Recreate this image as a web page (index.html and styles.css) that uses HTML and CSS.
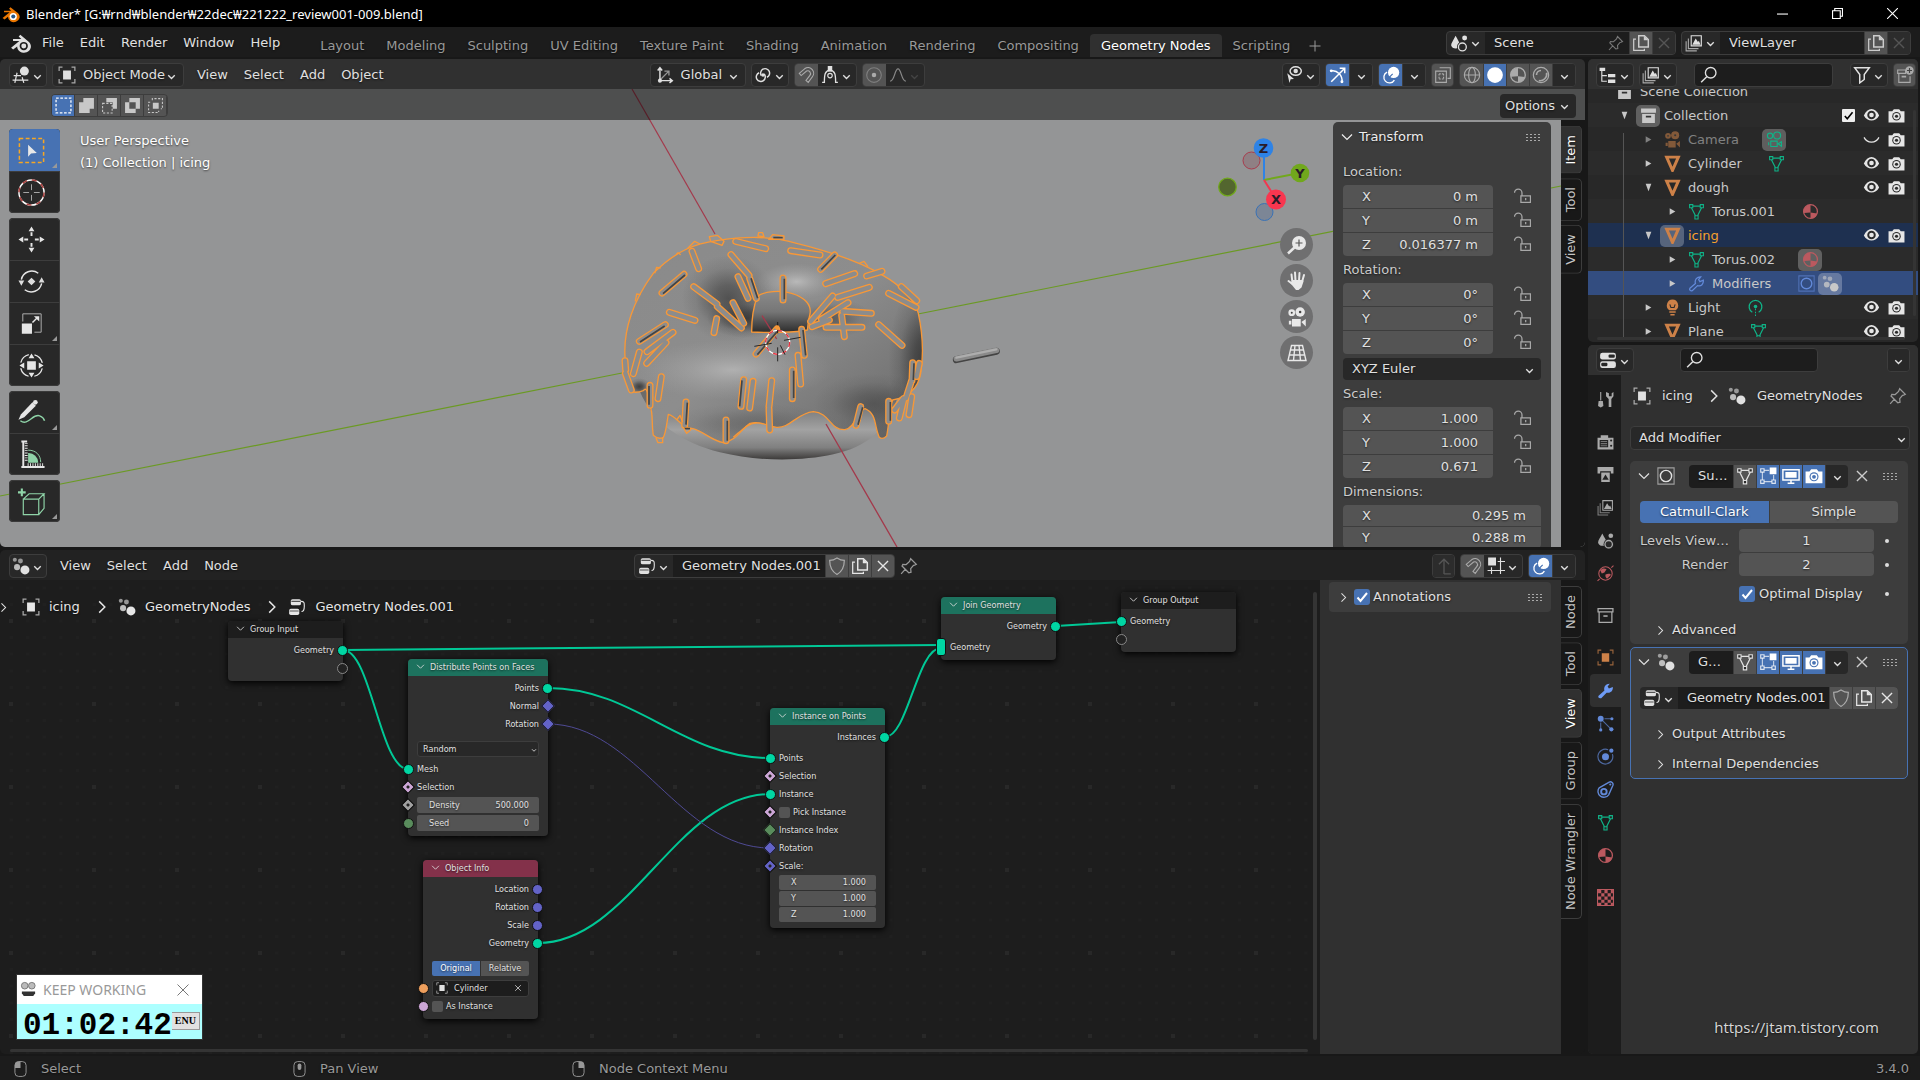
FILE: index.html
```html
<!DOCTYPE html>
<html lang="en">
<head>
    <meta charset="UTF-8">
    <meta name="viewport" content="width=device-width, initial-scale=1.0">
    <title>Blender* [G:₩rnd₩blender₩22dec₩221222_review001-009.blend]</title>
    <link rel="stylesheet" href="styles.css">
</head>
<body>

<!-- Icon sprite -->
<svg class="sprite" aria-hidden="true">
    <symbol id="chev" viewBox="0 0 16 16"><path d="M4 6.5l4 4 4-4" fill="none" stroke="currentColor" stroke-width="1.7"/></symbol>
    <symbol id="chev-thin" viewBox="0 0 16 16"><path d="M3 5.500l5 5 5-5" fill="none" stroke="currentColor" stroke-width="1.200"/></symbol>
    <symbol id="right" viewBox="0 0 16 16"><path d="M5.500 3l5 5-5 5" fill="none" stroke="currentColor" stroke-width="1.300"/></symbol>
    <symbol id="tri-down" viewBox="0 0 16 16"><path d="M4.500 3.500h7L8 12.500z" fill="currentColor"/></symbol>
    <symbol id="tri-right" viewBox="0 0 16 16"><path d="M4.500 4v8l7-4z" fill="currentColor"/></symbol>
    <symbol id="close" viewBox="0 0 16 16"><path d="M3.500 3.500l9 9m0-9l-9 9" fill="none" stroke="currentColor" stroke-width="1.200"/></symbol>
    <symbol id="plus" viewBox="0 0 16 16"><path d="M8 2.500v11M2.500 8h11" fill="none" stroke="currentColor"/></symbol>
    <symbol id="blender" viewBox="0 0 16 16"><path d="M.8 11.500L6.800 6.500H2.200V5h6L6.300 3.300 7.500 2l6.300 5.300a5 4.600 0 1 1-8.600 3.200l-2.900 2.300z" fill="currentColor"/><circle cx="10" cy="10.200" r="3" fill="#1c1c1c"/><circle cx="10" cy="10.200" r="1.800" fill="currentColor"/></symbol>
    <symbol id="blender-color" viewBox="0 0 16 16"><path d="M.5 11.500L6.800 6.500H1.800V5h6.400L6.300 3.300 7.500 2l6.800 5.300a5.200 4.700 0 1 1-9 3.200l-3 2.300z" fill="#ea7600"/><circle cx="10" cy="10.200" r="3.200" fill="#fff"/><circle cx="10" cy="10.200" r="1.800" fill="#265787"/></symbol>
    <symbol id="editor3d" viewBox="0 0 16 16"><path d="M4.500 6L2.500 15M9 10l1.500 5M1.500 8.500H8M.5 12.500h14" fill="none" stroke="currentColor" stroke-width="1.100"/><circle cx="11" cy="4.500" r="4" fill="currentColor"/></symbol>
    <symbol id="object" viewBox="0 0 16 16"><rect x="4.500" y="4" width="7" height="8" fill="currentColor"/><path d="M1 4.500V1h3M12 1h3v3.500M15 11.500V15h-3M4 15H1v-3.500" fill="none" stroke="currentColor" stroke-opacity=".7" stroke-width="1.100"/></symbol>
    <symbol id="axes" viewBox="0 0 16 16"><path d="M3.500 13V2M1.500 4l2-2.500 2 2.500M3.500 13H14M12 11l2.500 2-2.500 2" fill="none" stroke="currentColor" stroke-width="1.300"/><path d="M4 12l7-7M7.500 4.500H11.500V8.500" fill="none" stroke="currentColor" stroke-opacity=".6" stroke-width="1.200"/><circle cx="3.500" cy="13" r="1.800" fill="currentColor"/></symbol>
    <symbol id="pivot" viewBox="0 0 16 16"><path d="M6.500 8.500a4 4 0 1 1 5 1.500M9 7a4 4 0 1 1-4.500-1" fill="none" stroke="currentColor" stroke-width="1.300"/><circle cx="8" cy="8" r="1.600" fill="currentColor"/></symbol>
    <symbol id="magnet" viewBox="0 0 16 16"><path d="M2 6.500l5-4.200a5 5 0 0 1 6.500 7.500L10 14.500l-2-1.700 3.500-4.500a2.500 2.500 0 0 0-3-3.800L3.700 8.500z" fill="none" stroke="currentColor"/></symbol>
    <symbol id="snapvert" viewBox="0 0 16 16"><path d="M1 14.500h2c0-7 .5-10 5-11 4.500 1 5 4 5 11h2" fill="none" stroke="currentColor" stroke-width="1.200"/><rect x="6" y="0" width="4" height="5" fill="currentColor"/><circle cx="8" cy="8.500" r="2" fill="none" stroke="currentColor"/></symbol>
    <symbol id="prop" viewBox="0 0 16 16"><circle cx="8" cy="8" r="6.500" fill="none" stroke="currentColor" stroke-opacity=".5"/><circle cx="8" cy="8" r="2" fill="currentColor"/></symbol>
    <symbol id="bell" viewBox="0 0 16 16"><path d="M1 13.500C5 13.500 5 2.500 8 2.500s3 11 7 11" fill="none" stroke="currentColor" stroke-width="1.100"/></symbol>
    <symbol id="visible" viewBox="0 0 16 16"><ellipse cx="9.500" cy="4.500" rx="5" ry="3.800" fill="none" stroke="currentColor" stroke-width="1.300"/><circle cx="9.500" cy="4.500" r="2" fill="currentColor"/><path d="M2 6.500l6 5-3 .3-1 3.200z" fill="currentColor"/></symbol>
    <symbol id="gizmo" viewBox="0 0 16 16"><path d="M2 14L14 2M9.500 2H14v4.500M1.500 4.500C7 3 12.500 8.500 11.500 14.500" fill="none" stroke="currentColor" stroke-width="1.300"/><circle cx="2" cy="4.300" r="1.300" fill="currentColor"/><circle cx="11.500" cy="14" r="1.300" fill="currentColor"/></symbol>
    <symbol id="overlay" viewBox="0 0 16 16"><circle cx="10.300" cy="5.700" r="5" fill="currentColor"/><path d="M4.500 5.500a5 5 0 1 0 6.500 7" fill="none" stroke="currentColor" stroke-width="1.200"/><path d="M6.500 10l3-3" stroke="#4772b3"/></symbol>
    <symbol id="xray" viewBox="0 0 16 16"><path d="M5 1.500h9.500V11H12M1.500 4.500h9.500v10H1.500z" fill="none" stroke="currentColor"/><path d="M4.500 7h4M4.500 11.500h4M8.500 7v4.500M4.500 7v4.500" stroke="currentColor" fill="none" stroke-dasharray="1.500 1"/></symbol>
    <symbol id="wire" viewBox="0 0 16 16"><circle cx="8" cy="8" r="6.800" fill="none" stroke="currentColor"/><ellipse cx="8" cy="8" rx="3" ry="6.800" fill="none" stroke="currentColor"/><path d="M1 8h14" stroke="currentColor"/></symbol>
    <symbol id="solid" viewBox="0 0 16 16"><circle cx="8" cy="8" r="7" fill="currentColor"/></symbol>
    <symbol id="material" viewBox="0 0 16 16"><circle cx="8" cy="8" r="6.500" fill="none" stroke="currentColor" stroke-width="1.200"/><path d="M8 1.500a6.500 6.500 0 0 0-6.300 8L8 9zM8 9l6.300.8A6.500 6.500 0 0 1 8 14.500z" fill="currentColor"/></symbol>
    <symbol id="rendered" viewBox="0 0 16 16"><circle cx="8" cy="8" r="6.800" fill="none" stroke="currentColor" stroke-width="1.100"/><path d="M4 8a4 4 0 0 1 4-4M6 13a6 6 0 0 0 7-7" fill="none" stroke="currentColor" stroke-width="1.500"/></symbol>
    <symbol id="outliner" viewBox="0 0 16 16"><path d="M.5 1.500h5v3h-5zM8 7h6.500v3H8zM8 12h6.500v3H8z" fill="currentColor"/><path d="M2.500 4.500v9H7M2.500 8.500H7" fill="none" stroke="currentColor"/></symbol>
    <symbol id="layers" viewBox="0 0 16 16"><path d="M5.500 1.500h9v9h-9z" fill="none" stroke="currentColor"/><path d="M3 4v9h9M1 6.500V15h9.500" fill="none" stroke="currentColor" stroke-opacity=".7"/><path d="M6.500 9.500l3-5.500 2 3 .8-1 1.500 3.500z" fill="currentColor"/></symbol>
    <symbol id="search" viewBox="0 0 16 16"><circle cx="9.500" cy="6" r="4.700" fill="none" stroke="currentColor" stroke-width="1.200"/><path d="M6 9.500l-5 5" stroke="currentColor" stroke-width="1.300"/></symbol>
    <symbol id="filter" viewBox="0 0 16 16"><path d="M1.500 1.500h13L10 7.500v4.500l-4 3V7.500z" fill="none" stroke="currentColor" stroke-width="1.300"/></symbol>
    <symbol id="newcoll" viewBox="0 0 16 16"><path d="M1.500 3.500h7v3h-7zM2.500 7v7.500h10V9" fill="none" stroke="currentColor"/><path d="M5 9.500h4" stroke="currentColor" stroke-width="1.500"/><circle cx="12" cy="4" r="3.700" fill="currentColor"/><path d="M12 1.800v4.400M9.800 4h4.400" stroke="#444"/></symbol>
    <symbol id="collection" viewBox="0 0 16 16"><path d="M1 1.500h14v4H1zM2 6.500h12V15H2z" fill="currentColor"/><path d="M5.500 9h5" stroke="#333" stroke-width="1.600"/></symbol>
    <symbol id="collection-o" viewBox="0 0 16 16"><path d="M1 1.500h14v3H1zM2 5v9.500h12V5" fill="none" stroke="currentColor" stroke-width="1.200"/><path d="M6 8.500h4" stroke="currentColor" stroke-width="1.500"/></symbol>
    <symbol id="movie" viewBox="0 0 16 16"><circle cx="3.800" cy="4.500" r="2.700" fill="currentColor"/><circle cx="10.500" cy="4" r="3.800" fill="currentColor"/><circle cx="3.800" cy="4.500" r=".8" fill="#444"/><circle cx="10.500" cy="4" r="1" fill="#444"/><path d="M4 9.500h7v6H4zM11.500 12L15 9.500v6zM1.500 11h2v3h-2z" fill="currentColor"/></symbol>
    <symbol id="movie-o" viewBox="0 0 16 16"><circle cx="3.800" cy="4.500" r="2.500" fill="none" stroke="currentColor"/><circle cx="10.500" cy="4.200" r="3.300" fill="none" stroke="currentColor"/><path d="M4.500 9.500h6v5h-6zM11.500 12l3-2v4.500zM2.500 10.500v3" fill="none" stroke="currentColor"/></symbol>
    <symbol id="meshobj" viewBox="0 0 16 16"><path d="M2.500 2h11L8 14.500z" fill="none" stroke="currentColor" stroke-width="2.800"/></symbol>
    <symbol id="mesh" viewBox="0 0 16 16"><path d="M3 3h10M3 4l4.500 9M13 4l-4.500 9" fill="none" stroke="currentColor" stroke-width="1.100"/><path d="M1.500 1.500h3v3h-3zM11.500 1.500h3v3h-3zM6.500 12h3v3h-3z" fill="#2b2b2b" stroke="currentColor"/></symbol>
    <symbol id="wrench" viewBox="0 0 16 16"><path d="M1.500 13L7 8C6 4.500 8.500 1.500 12 1.700L10 4.300l1.200 1.900 3.700-1.400C15.300 8.500 12.500 11 9 10l-5 5.200c-2 .8-3.500-1-2.500-2.200z" fill="currentColor"/></symbol>
    <symbol id="wrench-o" viewBox="0 0 16 16"><path d="M1.800 12.500L7 8C6 4.500 8.500 1.500 12 1.700L10 4.300l1.200 1.900 3.200-1.400C14.800 8.500 12.500 11 9 10l-5 4.700c-1.500.8-3-.8-2.200-2.200z" fill="none" stroke="currentColor" stroke-width="1.200"/></symbol>
    <symbol id="subsurf" viewBox="0 0 16 16"><path d="M.8.8h14.400v14.400H.8z" fill="none" stroke="currentColor" stroke-opacity=".6"/><circle cx="8" cy="8" r="5" fill="none" stroke="currentColor" stroke-width="1.300"/></symbol>
    <symbol id="geo" viewBox="0 0 16 16"><circle cx="11.500" cy="11.500" r="4" fill="currentColor"/><circle cx="4.500" cy="9" r="2.700" fill="currentColor" fill-opacity=".8"/><circle cx="2.500" cy="2.500" r="1.800" fill="currentColor" fill-opacity=".6"/><circle cx="7.500" cy="3.500" r="2.200" fill="currentColor" fill-opacity=".6"/></symbol>
    <symbol id="bulb" viewBox="0 0 16 16"><path d="M8 .5a5.500 5.500 0 0 1 3 10H5a5.500 5.500 0 0 1 3-10zM5 11.500h6V13H5zM6 14h4v1.500H6z" fill="currentColor"/><path d="M5.500 5l1 3h3l1-3" fill="none" stroke="#2b2b2b"/></symbol>
    <symbol id="lightdata" viewBox="0 0 16 16"><path d="M5 12.500a6 6 0 1 1 6 0" fill="none" stroke="currentColor" stroke-width="1.200"/><circle cx="8" cy="7" r="1.700" fill="currentColor"/><path d="M8 9v1.500M8 12v1.500M8 14.500v1.500" stroke="currentColor"/></symbol>
    <symbol id="eye" viewBox="0 0 16 16"><path d="M.8 8C4-.3 12-.3 15.200 8 12 14.300 4 14.300.8 8z" fill="currentColor"/><circle cx="8" cy="7.500" r="4" fill="#2b2b2b"/><circle cx="8" cy="7.500" r="2.200" fill="currentColor"/></symbol>
    <symbol id="eye-closed" viewBox="0 0 16 16"><path d="M1 6c3 6 11 6 14 0" fill="none" stroke="currentColor" stroke-width="1.200"/></symbol>
    <symbol id="photo" viewBox="0 0 16 16"><path d="M.5 4H4l1.500-2h5L12 4h3.500v10.500H.5z" fill="currentColor"/><circle cx="8" cy="8.700" r="4" fill="#2b2b2b"/><circle cx="8" cy="8.700" r="3" fill="currentColor"/><circle cx="8" cy="8.700" r="1.500" fill="#2b2b2b"/></symbol>
    <symbol id="photo-on" viewBox="0 0 16 16"><path d="M.5 4H4l1.500-2h5L12 4h3.500v10.500H.5z" fill="currentColor"/><circle cx="8" cy="8.700" r="4" fill="#4772b3"/><circle cx="8" cy="8.700" r="3" fill="currentColor"/><circle cx="8" cy="8.700" r="1.700" fill="#4772b3"/></symbol>
    <symbol id="scene" viewBox="0 0 16 16"><path d="M5 1.500c2 4 4 6.500 4 8.500a4.200 4.200 0 0 1-8 0c0-2 2-4.500 4-8.500z" fill="currentColor"/><circle cx="11" cy="11.500" r="4.800" fill="#282828"/><circle cx="11" cy="11.500" r="3.500" fill="none" stroke="currentColor" stroke-width="1.200"/><circle cx="13" cy="3.500" r="2.200" fill="currentColor"/></symbol>
    <symbol id="pin" viewBox="0 0 16 16"><path d="M9.500 1.500l5 5-1.500.7-1 .2-2.500 3 .3 3.100-2 .5-6-6 .7-1.500 3 .2 3-2.700z M5 10.500l-4 4.500" fill="none" stroke="currentColor" stroke-width="1.100"/></symbol>
    <symbol id="copy" viewBox="0 0 16 16"><path d="M6 1.500h5l3.500 3.500v6.500H6z" fill="none" stroke="currentColor" stroke-width="1.300"/><path d="M10.500 1.500v4h4z" fill="currentColor"/><path d="M3.500 4.500h-2v10H11v-1.500" fill="none" stroke="currentColor" stroke-width="1.100"/></symbol>
    <symbol id="props" viewBox="0 0 16 16"><rect x="1" y="1.500" width="14" height="6" rx="2" fill="currentColor"/><rect x="1" y="9" width="14" height="6" rx="2" fill="currentColor"/><rect x="8.500" y="3" width="5.500" height="3" rx="1" fill="#282828"/><rect x="2" y="10.500" width="5.500" height="3" rx="1" fill="#282828"/></symbol>
    <symbol id="tools" viewBox="0 0 16 16"><path d="M3.500 1v8" stroke="currentColor"/><path d="M1.500 9.500h4L6 14l-2.500 1.500L1 14z" fill="currentColor"/><path d="M8.500 1v4L11 7.500V15h2.500V7.500L15.500 5V1l-1.700 1v3h-2.600V2z" fill="currentColor"/></symbol>
    <symbol id="render" viewBox="0 0 16 16"><path d="M.5 4.500h3V2h7v2.500h5v11H.5z" fill="currentColor"/><path d="M2.500 6.500h8v7h-8z" fill="#222"/><path d="M3.500 8h6M3.500 10h6M3.500 12h6" stroke="currentColor" stroke-opacity=".6"/><circle cx="13.300" cy="7" r="1" fill="#222"/><circle cx="13.300" cy="12" r="1" fill="#222"/></symbol>
    <symbol id="output" viewBox="0 0 16 16"><path d="M.5 1h15v6h-2.500V5H3v2H.5z" fill="currentColor"/><path d="M4 6h8v9H4z" fill="currentColor"/><path d="M5 13l3-5 3 5z" fill="#222"/></symbol>
    <symbol id="world" viewBox="0 0 16 16"><circle cx="8" cy="8" r="6.300" fill="none" stroke="currentColor"/><path d="M3 5c2-2 4-2 6-1L7 7 4.500 8zM8 9c2-1 5-1 5 0.500L9.500 13C8.500 12 7.500 11 8 9z" fill="currentColor"/><path d="M.5 15l2-2M13.500 2.500l2-2" stroke="currentColor"/></symbol>
    <symbol id="particles" viewBox="0 0 16 16"><circle cx="3.500" cy="3.500" r="2.800" fill="currentColor"/><path d="M7 3.500h6M3.500 7v7M5.500 5.500l8 8" stroke="currentColor" stroke-opacity=".7"/><circle cx="14" cy="3.500" r="1.500" fill="currentColor"/><circle cx="3.500" cy="14" r="1.500" fill="currentColor"/><circle cx="13.500" cy="13.500" r="2" fill="currentColor"/></symbol>
    <symbol id="physics" viewBox="0 0 16 16"><path d="M10.500 1.600a7 7 0 1 0 4 4.200" fill="none" stroke="currentColor" stroke-opacity=".7" stroke-width="1.100"/><circle cx="8" cy="8.300" r="3.300" fill="currentColor"/><circle cx="13.500" cy="2.500" r="2" fill="currentColor"/></symbol>
    <symbol id="constraint" viewBox="0 0 16 16"><path d="M2 6.500L11.500 1a2.500 2.500 0 0 1 3.500 3L11 13a5 5 0 1 1-9-6.500z" fill="none" stroke="currentColor" stroke-width="1.300"/><circle cx="6.500" cy="10" r="2.600" fill="none" stroke="currentColor" stroke-width="1.800"/><circle cx="12.500" cy="3.300" r="1" fill="currentColor"/></symbol>
    <symbol id="texture" viewBox="0 0 16 16"><path d="M.5.5h15v15H.5z" fill="none" stroke="currentColor"/><path d="M1 1h3v3h3V1h3v3h3V1h2v3h-2v3h2v3h-2v3h2v2h-2v-2h-3v2H7v-2H4v2H1v-2h3v-3H1V7h3V4H1zM4 7v3h3V7zM7 4v3h3V4zM10 7v3h3V7zM7 10v3h3v-3z" fill="currentColor" fill-rule="evenodd"/></symbol>
    <symbol id="monitor" viewBox="0 0 16 16"><path d="M.8 2.500h14.400v9H.8zM5 14.500h6M8 11.500v3" fill="none" stroke="currentColor" stroke-width="1.300"/><path d="M3 4.500h10v5H3z" fill="currentColor"/></symbol>
    <symbol id="editmode" viewBox="0 0 16 16"><path d="M4.500 3H9M3 4.500v7M4.500 13h7M13 7v4.500" stroke="currentColor" stroke-opacity=".7"/><path d="M1.500 1.500h3v3h-3zM1.500 11.500h3v3h-3zM11.500 11.500h3v3h-3z" fill="none" stroke="currentColor" stroke-opacity=".8"/><path d="M9.500.5h6v6h-6z" fill="currentColor"/></symbol>
    <symbol id="shield" viewBox="0 0 16 16"><path d="M8 .8c2.500 1.700 4.500 2.200 6.500 2.200 0 6-1.500 9.500-6.500 12.500C3 12.500 1.500 9 1.500 3 3.500 3 5.500 2.500 8 .8z" fill="none" stroke="currentColor" stroke-width="1.100"/></symbol>
    <symbol id="tree" viewBox="0 0 16 16"><rect x="2.500" y="1" width="9" height="5.500" rx="1.500" fill="currentColor"/><rect x="1" y="9.500" width="9" height="5.500" rx="1.500" fill="currentColor"/><path d="M3 3h8M1.500 11.500h8" stroke="#555"/><path d="M11.500 3c3 0 3 1.500 3 4s0 5-2.500 5" fill="none" stroke="currentColor"/></symbol>
    <symbol id="parent" viewBox="0 0 16 16"><path d="M8 15h6M8 15V2M3.500 6.500L8 2l4.500 4.500" fill="none" stroke="currentColor" stroke-width="1.200"/></symbol>
    <symbol id="snapgrid" viewBox="0 0 16 16"><path d="M1 .5h7v7H1z" fill="currentColor"/><path d="M4 9v6M12 .5V15M9.500 4H16M.5 12H16" stroke="currentColor"/></symbol>
    <symbol id="lock" viewBox="0 0 16 16"><path d="M6.500 7.500h9v6h-9z" fill="none" stroke="currentColor" stroke-width="1.200"/><path d="M.5 4.500a3.500 3.500 0 0 1 7 0v3M11 9.500v2" fill="none" stroke="currentColor" stroke-width="1.200"/></symbol>
    <symbol id="grip" viewBox="0 0 16 8"><path d="M1 1.500h14M1 4.500h14M1 7.500h14" stroke="currentColor" stroke-width="1.200" stroke-dasharray="2 2"/></symbol>
    <symbol id="mouse-l" viewBox="0 0 14 18"><rect x="1" y="1" width="12" height="16" rx="4" fill="none" stroke="currentColor"/><path d="M1 8V5a4 4 0 0 1 4-4h2v7z" fill="currentColor"/></symbol>
    <symbol id="mouse-m" viewBox="0 0 14 18"><rect x="1" y="1" width="12" height="16" rx="4" fill="none" stroke="currentColor"/><rect x="5" y="3" width="4" height="7" rx="2" fill="currentColor"/></symbol>
    <symbol id="mouse-r" viewBox="0 0 14 18"><rect x="1" y="1" width="12" height="16" rx="4" fill="none" stroke="currentColor"/><path d="M13 8V5a4 4 0 0 0-4-4H7v7z" fill="currentColor"/></symbol>
    <symbol id="sel-set" viewBox="0 0 16 16"><path d="M1 1h14v14H1z" fill="none" stroke="currentColor" stroke-width="1.200" stroke-dasharray="2.500 1.500"/></symbol>
    <symbol id="sel-ext" viewBox="0 0 16 16"><path d="M5 1h10v10h-4v4H1V5h4z" fill="currentColor"/></symbol>
    <symbol id="sel-sub" viewBox="0 0 16 16"><path d="M5 1h10v10h-4V5H5z" fill="currentColor"/><path d="M1.500 6h9v9h-9z" fill="none" stroke="currentColor" stroke-dasharray="2 1.500"/></symbol>
    <symbol id="sel-diff" viewBox="0 0 16 16"><path d="M5 1h10v10h-4v4H1V5h4zM5 5v6h6V5z" fill="currentColor" fill-rule="evenodd"/></symbol>
    <symbol id="sel-and" viewBox="0 0 16 16"><path d="M5.500 5.500h5.500v5.500H5.500z" fill="currentColor"/><path d="M5 3V1.500h9.500V11H13M3 5H1.500v9.500H11V13" fill="none" stroke="currentColor" stroke-dasharray="2 1.500"/></symbol>
</svg>

<header class="titlebar">
    <svg class="icon"><use href="#blender-color"/></svg>
    <span class="title">Blender* [G:₩rnd₩blender₩22dec₩221222_review001-009.blend]</span>
    <button class="win" aria-label="Minimize"><svg viewBox="0 0 10 10"><path d="M0 5.500h10" stroke="#fff"/></svg></button>
    <button class="win" aria-label="Restore"><svg viewBox="0 0 10 10"><path d="M.5 2.500h7v7h-7zM2.500 2.500v-2h7v7h-2" fill="none" stroke="#fff"/></svg></button>
    <button class="win" aria-label="Close"><svg viewBox="0 0 10 10"><path d="M0 0l10 10M10 0L0 10" stroke="#fff"/></svg></button>
</header>

<div class="topbar">
    <button class="logo" aria-label="Blender"><svg class="icon"><use href="#blender"/></svg></button>
    <nav class="menus">
        <button>File</button><button>Edit</button><button>Render</button><button>Window</button><button>Help</button>
    </nav>
    <nav class="workspaces">
        <button>Layout</button><button>Modeling</button><button>Sculpting</button><button>UV Editing</button><button>Texture Paint</button><button>Shading</button><button>Animation</button><button>Rendering</button><button>Compositing</button><button class="active">Geometry Nodes</button><button>Scripting</button>
        <button class="add" aria-label="Add workspace"><svg class="icon"><use href="#plus"/></svg></button>
    </nav>
    <div class="group datablock">
        <button class="pick" aria-label="Browse scene"><svg class="icon"><use href="#scene"/></svg><svg class="chev"><use href="#chev"/></svg></button>
        <input class="name" value="Scene" aria-label="Scene">
        <svg class="icon dim pinned"><use href="#pin"/></svg>
        <button class="cell" aria-label="New scene"><svg class="icon"><use href="#copy"/></svg></button>
        <button class="cell off" aria-label="Delete scene"><svg class="icon"><use href="#close"/></svg></button>
    </div>
    <div class="group datablock">
        <button class="pick" aria-label="Browse view layer"><svg class="icon"><use href="#layers"/></svg><svg class="chev"><use href="#chev"/></svg></button>
        <input class="name" value="ViewLayer" aria-label="View layer">
        <button class="cell" aria-label="New view layer"><svg class="icon"><use href="#copy"/></svg></button>
        <button class="cell off" aria-label="Delete view layer"><svg class="icon"><use href="#close"/></svg></button>
    </div>
</div>

<main class="workspace">
    <div class="left">
        <!-- 3D viewport -->
        <section class="area view3d">
            <div class="bar">
                <button class="group pick" aria-label="Editor type"><svg class="icon"><use href="#editor3d"/></svg><svg class="chev"><use href="#chev"/></svg></button>
                <label class="group dropdown mode"><svg class="icon"><use href="#object"/></svg><select aria-label="Mode"><option>Object Mode</option></select><svg class="chev"><use href="#chev"/></svg></label>
                <nav class="menus"><button>View</button><button>Select</button><button>Add</button><button>Object</button></nav>
                <div class="grow-5"></div>
                <label class="group dropdown orient"><svg class="icon"><use href="#axes"/></svg><select aria-label="Orientation"><option>Global</option></select><svg class="chev"><use href="#chev"/></svg></label>
                <button class="group pick" aria-label="Pivot point"><svg class="icon"><use href="#pivot"/></svg><svg class="chev"><use href="#chev"/></svg></button>
                <div class="group"><button class="cell" aria-label="Snap"><svg class="icon"><use href="#magnet"/></svg></button><button class="pick" aria-label="Snap to"><svg class="icon"><use href="#snapvert"/></svg><svg class="chev"><use href="#chev"/></svg></button></div>
                <div class="group"><button class="cell" aria-label="Proportional editing"><svg class="icon"><use href="#prop"/></svg></button><button class="pick off" aria-label="Falloff"><svg class="icon"><use href="#bell"/></svg><svg class="chev"><use href="#chev"/></svg></button></div>
                <div class="grow-7"></div>
                <button class="group pick" aria-label="Object types"><svg class="icon"><use href="#visible"/></svg><svg class="chev"><use href="#chev"/></svg></button>
                <div class="group"><button class="cell on" aria-label="Gizmos"><svg class="icon"><use href="#gizmo"/></svg></button><button class="cell open" aria-label="Gizmo options"><svg class="chev"><use href="#chev"/></svg></button></div>
                <div class="group"><button class="cell on" aria-label="Overlays"><svg class="icon"><use href="#overlay"/></svg></button><button class="cell open" aria-label="Overlay options"><svg class="chev"><use href="#chev"/></svg></button></div>
                <div class="group"><button class="cell" aria-label="X-Ray"><svg class="icon"><use href="#xray"/></svg></button></div>
                <div class="group"><button class="cell" aria-label="Wireframe"><svg class="icon"><use href="#wire"/></svg></button><button class="cell on" aria-label="Solid"><svg class="icon"><use href="#solid"/></svg></button><button class="cell" aria-label="Material preview"><svg class="icon"><use href="#material"/></svg></button><button class="cell" aria-label="Rendered"><svg class="icon"><use href="#rendered"/></svg></button><button class="cell open" aria-label="Shading options"><svg class="chev"><use href="#chev"/></svg></button></div>
            </div>

            <div class="region">
                <svg class="scene3d" viewBox="0 89 1585 458" preserveAspectRatio="xMidYMid slice">
                    <defs>
                        <linearGradient id="dough" x1="0" y1="0" x2="0" y2="1"><stop offset=".6" stop-color="#6b6b6b"/><stop offset=".8" stop-color="#a2a2a2"/><stop offset=".92" stop-color="#808080"/><stop offset="1" stop-color="#3c3a39"/></linearGradient>
                        <linearGradient id="glaze" x1="0" y1="0" x2="1" y2="1"><stop offset="0" stop-color="#8a8a8a"/><stop offset=".5" stop-color="#8d8d8d"/><stop offset=".8" stop-color="#767676"/><stop offset="1" stop-color="#555"/></linearGradient>
                        <linearGradient id="hole" x1="0" y1="0" x2="0" y2="1"><stop offset="0" stop-color="#8a8a8a"/><stop offset=".5" stop-color="#767676"/><stop offset="1" stop-color="#2c2c2c"/></linearGradient>
                        <radialGradient id="dark"><stop offset="0" stop-color="#2b2b2b" stop-opacity=".8"/><stop offset=".3" stop-color="#2b2b2b" stop-opacity=".6"/><stop offset=".7" stop-color="#2b2b2b" stop-opacity=".15"/><stop offset="1" stop-color="#2b2b2b" stop-opacity="0"/></radialGradient>
                        <radialGradient id="light"><stop offset="0" stop-color="#c4c4c4" stop-opacity=".8"/><stop offset=".4" stop-color="#bbb" stop-opacity=".45"/><stop offset="1" stop-color="#aaa" stop-opacity="0"/></radialGradient>
                        <path id="icing" d="M75 440C70 360 100 270 160 190 230 120 290 100 350 92 440 78 510 78 590 100 690 125 790 160 850 197 900 225 945 270 955 310 970 380 970 440 962 490 955 530 930 560 878 570 866 600 868 640 860 678Q848 690 838 682C822 650 832 612 795 596 770 600 768 652 735 659 690 662 690 608 640 605 590 610 570 655 530 652 500 650 490 632 450 640 420 660 410 692 370 698 330 690 310 662 275 655 240 650 232 620 205 613 200 640 198 668 190 682Q175 690 160 676C154 640 160 606 150 590 146 560 142 526 130 542 110 550 92 547 88 540 75 510 78 480 75 440z"/>
                        <clipPath id="inside"><use href="#icing"/></clipPath>
                        <path id="sprinkles" d="M276 124l20 52M407 94l90 22M572 122l88 13M704 135l-42 43M764 191l-87 30M252 193l-66 56M281 230l70 52M393 134l54 62M414 200l30 65M449 205l20 60M399 278l32 62M352 290l72 64M208 307l77 24M350 326l-8 42M196 344l-78 50M219 367l-78 58M198 398l-58 62M118 426l-18 65M75 452l2 28M76 490l18 50M184 500l-10 66M150 526v60M258 576l-4 70M431 509l-8 80M459 514l-10 80M515 512l-8 78M507 596l2 64M378 630v62M549 204v66M530 358l-62 74M605 358l8 78M594 436l8 86M577 480v86M698 258l-66 76M744 278l-80 50M808 232l-95 30M728 304l86 6M678 352h108M725 316l8 64M636 350l52-20M836 344l70 62M866 250l82 42M904 230l46 42M782 590l-14 56M866 574v60M938 458l-2 54M936 508l-18 56M912 568l-14 56M935 560l-8 54M884 600l26-34M800 198l46-14M958 460l-8 40"/>
                    </defs>
                    <path d="M0 496L622 373M918 314L1561 186" stroke="#6b9a24" stroke-width="1.200"/>
                    <path d="M632 89L715 234" stroke="#a3394b" stroke-width="1.200"/>
                    <g transform="translate(600 210) scale(.33333)" stroke-linejoin="round">
                        <path d="M110 520C150 640 250 700 360 727S600 755 700 733 860 660 890 570L700 300H300z" fill="url(#dough)"/>
                        <use href="#icing" fill="url(#glaze)"/>
                        <g clip-path="url(#inside)">
                            <ellipse cx="975" cy="450" rx="110" ry="240" fill="url(#dark)"/>
                            <ellipse cx="385" cy="265" rx="140" ry="130" fill="url(#dark)" opacity=".75"/>
                            <ellipse cx="440" cy="325" rx="120" ry="60" fill="url(#dark)"/>
                            <ellipse cx="690" cy="325" rx="130" ry="60" fill="url(#dark)" opacity=".6"/>
                            <ellipse cx="590" cy="215" rx="120" ry="55" fill="url(#light)"/>
                            <ellipse cx="400" cy="480" rx="300" ry="90" fill="url(#light)" opacity=".8"/>
                            <ellipse cx="820" cy="580" rx="180" ry="90" fill="url(#dark)" opacity=".5"/>
                            <ellipse cx="460" cy="640" rx="260" ry="60" fill="url(#dark)" opacity=".3"/>
                            <ellipse cx="118" cy="530" rx="34" ry="26" fill="url(#dark)"/>
                        </g>
                        <use href="#icing" class="outline"/>
                        <path d="M455 366C455 330 460 290 472 260 490 243 545 240 575 250 615 262 635 285 630 312 622 340 624 355 622 360 590 368 500 368 455 366z" fill="url(#hole)" stroke="#f79838" stroke-width="4"/>
                        <path d="M486 317l44 70M678 642l213 369" stroke="#a3394b" stroke-width="4"/>
                        <!-- sprinkles: wide orange stroke, then the grey core -->
                        <use href="#sprinkles" class="rim"/>
                        <use href="#sprinkles" class="core"/>
                        <path class="shade" d="M664 178l42-43M189 251l66-56M426 511l-7 78M147 528v56M262 578l-4 66M382 632v60M553 206v62M534 362l-62 72M609 360l8 76M871 576v56M520 83h28M252 656h18M453 205l20 60M581 482v82M942 460l-2 50M120 396l74-48M788 592l-14 52"/>
                        <path class="outline" d="M328 80l24-4 20 18-6 12-34-12zM506 88l12-14 34 4v10zM474 78l2-10h12l4 12zM262 116l22-22 16 8M228 134l6-6 8 6M164 190l6-18 12 2M106 274l4-22 12 2M778 160l14-6 12 16M168 684l6 14h14v-14M230 630l10-14 8 20M250 652l10 18 14-12M400 682c24-20 40-40 70-44"/>
                        <path d="M1069 449l120-25" stroke="#444" stroke-width="21" stroke-linecap="round"/>
                        <path d="M1069 446l120-25" stroke="#8a8a8a" stroke-width="17" stroke-linecap="round"/>
                        <path d="M1069 443l120-25" stroke="#adadad" stroke-width="7" stroke-linecap="round"/>
                        <circle cx="533" cy="397" r="36" fill="none" stroke="#fff" stroke-width="4"/>
                        <circle cx="533" cy="397" r="36" fill="none" stroke="#e8303c" stroke-width="4" stroke-dasharray="14 14"/>
                        <path d="M533 336v34M533 412v42M463 409l52-9M552 391l50-9M541 406l14 28" stroke="#111" stroke-width="2.500"/>
                        <circle cx="532" cy="353" r="7" fill="#f79838"/>
                    </g>
                </svg>

                <div class="toolsettings">
                    <div class="selmodes">
                        <button class="on" aria-label="Set"><svg><use href="#sel-set"/></svg></button><button aria-label="Extend"><svg><use href="#sel-ext"/></svg></button><button aria-label="Subtract"><svg><use href="#sel-sub"/></svg></button><button aria-label="Difference"><svg><use href="#sel-diff"/></svg></button><button aria-label="Intersect"><svg><use href="#sel-and"/></svg></button>
                    </div>
                    <button class="options">Options<svg class="chev"><use href="#chev"/></svg></button>
                </div>

                <div class="stage">
                    <div class="shelf">
                        <div class="toolset">
                            <button class="on more" aria-label="Select box"><svg viewBox="0 0 30 30"><path d="M2.500 2.500h25v25h-25z" fill="none" stroke="#f5a623" stroke-width="1.600" stroke-dasharray="4 2.500"/><path d="M11.500 9v12.500l3-3.500 6-.5z" fill="#e8e8e8"/></svg></button>
                            <button aria-label="Cursor"><svg viewBox="0 0 30 30"><circle cx="15" cy="15" r="13" fill="none" stroke="#fff" stroke-width="1.500"/><circle cx="15" cy="15" r="13" fill="none" stroke="#a8403e" stroke-width="1.600" stroke-dasharray="5.100 5.100"/><path d="M15 6.500v6M15 17.500v6M6.500 15h6M17.500 15h6" stroke="#aaa"/></svg></button>
                        </div>
                        <div class="toolset">
                            <button aria-label="Move"><svg viewBox="0 0 30 30"><path d="M15 1.500l3 5h-6zM15 28.500l3-5h-6zM1.500 15l5-3v6zM28.500 15l-5-3v6z" fill="#e6e6e6"/><path d="M15 7.500v4M15 18.500v4M7.500 15h4M18.500 15h4" stroke="#e6e6e6" stroke-width="2"/></svg></button>
                            <button aria-label="Rotate"><svg viewBox="0 0 30 30"><path d="M4.500 13A11 11 0 0 1 22 6.500M25.500 17A11 11 0 0 1 8 23.500" fill="none" stroke="#e6e6e6" stroke-width="1.500"/><path d="M1.500 14h6l-3 5.500zM22.500 16h6l-3-5.500zM15 11l4 4-4 4-4-4z" fill="#dcdcdc"/></svg></button>
                            <button class="more" aria-label="Scale"><svg viewBox="0 0 30 30"><path d="M6 13V5h19v19h-7" fill="none" stroke="#b0b0b0"/><path d="M5 15h10.500v10.500H5z" fill="#e6e6e6"/><path d="M16 14l5-5" stroke="#e6e6e6" stroke-width="1.500"/><path d="M17.500 7.500h5.500v5.500z" fill="#e6e6e6"/></svg></button>
                            <button aria-label="Transform"><svg viewBox="0 0 30 30"><circle cx="15" cy="15" r="11.500" fill="none" stroke="#e6e6e6" stroke-width="1.300" stroke-dasharray="12 6" stroke-dashoffset="-3"/><path d="M10.500 10.500h9v9h-9zM15 2.500l3 5h-6zM15 27.500l3-5h-6zM2.500 15l5-3v6zM27.500 15l-5-3v6z" fill="#e6e6e6"/></svg></button>
                        </div>
                        <div class="toolset">
                            <button class="more" aria-label="Annotate"><svg viewBox="0 0 30 30"><path d="M1.500 22.500L4 17 16 4.500 19.500 8 7.500 20z" fill="#e6e6e6"/><circle cx="19" cy="4.500" r="2.400" fill="#e6e6e6"/><path d="M3.500 23.500c8 6 13-8 20-5 2.500 1 4.500 3 5 5" fill="none" stroke="#8fd4a8" stroke-width="1.500"/></svg></button>
                            <button aria-label="Measure"><svg viewBox="0 0 30 30"><path d="M4.500 1.500h6M4.500 28h24M6.500 2v26" stroke="#e6e6e6" stroke-width="2"/><path d="M9.500 3v20" stroke="#e6e6e6" stroke-width="3" stroke-dasharray="1 1.500"/><path d="M11 25.500h17" stroke="#e6e6e6" stroke-width="3" stroke-dasharray="1 1.500"/><path d="M11.500 13.500a10 10 0 0 1 10.500 10H11.500z" fill="#8fd4a8"/><path d="M11.500 10.500c8 0 13 5 13 12.500" fill="none" stroke="#8fd4a8"/></svg></button>
                        </div>
                        <div class="toolset">
                            <button class="more" aria-label="Add cube"><svg viewBox="0 0 30 30"><path d="M5 1.500v8M1 5.500h8" stroke="#8fd4a8" stroke-width="2.200"/><path d="M6.500 12.500h16v16h-16zM6.500 12.500l6-5.500H28l-5.500 5.500M28 7v15l-5.500 6.500" fill="none" stroke="#8fd4a8" stroke-width="1.200"/></svg></button>
                        </div>
                    </div>
                    <div class="viewinfo">User Perspective<br>(1) Collection | icing</div>

                    <div class="nav">
                        <svg class="axisball" viewBox="1213 132 100 93">
                            <path d="M1264 180V148" stroke="#2e83e6" stroke-width="2"/><path d="M1264 180l36-7" stroke="#71a81c" stroke-width="2"/><path d="M1264 180l12 19" stroke="#f33650" stroke-width="2"/>
                            <circle cx="1251.500" cy="160.500" r="8.500" fill="#8f8084" stroke="#a83c4d"/><circle cx="1227.500" cy="187" r="8.800" fill="#53662f" stroke="#71a81c" stroke-width="1.300"/><circle cx="1264.500" cy="212" r="8.500" fill="#7c8696" stroke="#3a72b5"/>
                            <circle cx="1263.500" cy="148" r="9.800" fill="#2e83e6"/><circle cx="1300" cy="173" r="9.300" fill="#71a81c"/><circle cx="1276" cy="199.500" r="10" fill="#f9364f"/>
                            <text x="1263.500" y="152.500">Z</text><text x="1300" y="177.500">Y</text><text x="1276" y="204">X</text>
                        </svg>
                        <button aria-label="Zoom"><svg viewBox="0 0 20 20"><circle cx="12" cy="8" r="7" fill="#e8e8e8"/><path d="M8 12l-7 6.500" stroke="#e8e8e8" stroke-width="2.500"/><path d="M12 4.500v7M8.500 8h7" stroke="#555" stroke-width="1.200"/></svg></button>
                        <button aria-label="Pan"><svg viewBox="0 0 20 20"><path d="M1.500 10l4 3M5.500 12L4.500 3.500M8.500 10L8 1.500M12 10l.5-8M15 11l2-7" fill="none" stroke="#e8e8e8" stroke-width="2" stroke-linecap="round"/><path d="M2.500 11l3 .5V9h10.500l.5 1.500-2 6-3 2.500H9z" fill="#e8e8e8"/></svg></button>
                        <button aria-label="Camera view"><svg><use href="#movie"/></svg></button>
                        <button aria-label="Perspective"><svg viewBox="0 0 20 20"><path d="M4.500 2.500h11L19 17.500H1zM8 2.500L6.500 17.500M12 2.500l1.500 15M3.500 7h13M2.500 12h15" fill="none" stroke="#e8e8e8" stroke-width="1.400"/></svg></button>
                    </div>

                    <aside class="npanel">
                        <h2><svg class="chev big"><use href="#chev-thin"/></svg>Transform<svg class="grip"><use href="#grip"/></svg></h2>
                        <p>Location:</p>
                        <div class="vec3">
                            <div class="fields">
                                <label>X<input value="0 m"></label>
                                <label>Y<input value="0 m"></label>
                                <label>Z<input value="0.016377 m"></label>
                            </div>
                            <div class="locks"><button aria-label="Lock X"><svg><use href="#lock"/></svg></button><button aria-label="Lock Y"><svg><use href="#lock"/></svg></button><button aria-label="Lock Z"><svg><use href="#lock"/></svg></button></div>
                        </div>
                        <p>Rotation:</p>
                        <div class="vec3">
                            <div class="fields">
                                <label>X<input value="0°"></label>
                                <label>Y<input value="0°"></label>
                                <label>Z<input value="0°"></label>
                            </div>
                            <div class="locks"><button aria-label="Lock X"><svg><use href="#lock"/></svg></button><button aria-label="Lock Y"><svg><use href="#lock"/></svg></button><button aria-label="Lock Z"><svg><use href="#lock"/></svg></button></div>
                        </div>
                        <label class="dropdown wide"><select aria-label="Rotation mode"><option>XYZ Euler</option></select><svg class="chev"><use href="#chev"/></svg></label>
                        <p>Scale:</p>
                        <div class="vec3">
                            <div class="fields">
                                <label>X<input value="1.000"></label>
                                <label>Y<input value="1.000"></label>
                                <label>Z<input value="0.671"></label>
                            </div>
                            <div class="locks"><button aria-label="Lock X"><svg><use href="#lock"/></svg></button><button aria-label="Lock Y"><svg><use href="#lock"/></svg></button><button aria-label="Lock Z"><svg><use href="#lock"/></svg></button></div>
                        </div>
                        <p>Dimensions:</p>
                        <div class="fields dims">
                            <label>X<input value="0.295 m"></label>
                            <label>Y<input value="0.288 m"></label>
                        </div>
                    </aside>
                    <nav class="ntabs"><button class="active">Item</button><button>Tool</button><button>View</button></nav>
                </div>
            </div>
        </section>

        <!-- Geometry node editor -->
        <section class="area nodes">
            <div class="bar dark">
                <button class="group pick" aria-label="Editor type"><svg class="icon"><use href="#geo"/></svg><svg class="chev"><use href="#chev"/></svg></button>
                <nav class="menus"><button>View</button><button>Select</button><button>Add</button><button>Node</button></nav>
                <div class="grow-3"></div>
                <div class="group datablock tree">
                    <button class="pick" aria-label="Browse node tree"><svg class="icon"><use href="#tree"/></svg><svg class="chev"><use href="#chev"/></svg></button>
                    <input class="name" value="Geometry Nodes.001" aria-label="Node tree">
                    <button class="cell" aria-label="Fake user"><svg class="icon"><use href="#shield"/></svg></button>
                    <button class="cell" aria-label="New node tree"><svg class="icon bright"><use href="#copy"/></svg></button>
                    <button class="cell" aria-label="Unlink"><svg class="icon bright"><use href="#close"/></svg></button>
                </div>
                <button class="plain" aria-label="Pin"><svg class="icon"><use href="#pin"/></svg></button>
                <div class="grow-4"></div>
                <div class="group off"><button class="cell" aria-label="Parent node tree"><svg class="icon"><use href="#parent"/></svg></button></div>
                <div class="group"><button class="cell" aria-label="Snap"><svg class="icon"><use href="#magnet"/></svg></button><button class="pick" aria-label="Snap to"><svg class="icon"><use href="#snapgrid"/></svg><svg class="chev"><use href="#chev"/></svg></button></div>
                <div class="group"><button class="cell on" aria-label="Overlays"><svg class="icon"><use href="#overlay"/></svg></button><button class="cell open" aria-label="Overlay options"><svg class="chev"><use href="#chev"/></svg></button></div>
            </div>
            <div class="nodebody">
                <div class="canvas">
                    <div class="path">
                        <svg class="chev"><use href="#right"/></svg>
                        <svg class="icon"><use href="#object"/></svg><span>icing</span>
                        <svg class="sep"><use href="#right"/></svg>
                        <svg class="icon"><use href="#geo"/></svg><span>GeometryNodes</span>
                        <svg class="sep"><use href="#right"/></svg>
                        <svg class="icon"><use href="#tree"/></svg><span>Geometry Nodes.001</span>
                    </div>

                    <svg class="links">
                        <g transform="translate(0 -580)" fill="none" stroke="#00c896" stroke-width="2">
                            <path d="M343 650L941 645"/>
                            <path d="M343 650C371 650 380 769 408 769"/>
                            <path d="M548 688C636 688 681 758 770 758"/>
                            <path d="M538 943C630 943 677 794 770 794"/>
                            <path d="M885 737C908 737 917 648 941 648"/>
                            <path d="M1056 626L1121 622"/>
                            <path d="M548 724C636 724 681 848 770 848" stroke="#4f4a94" stroke-width="1"/>
                        </g>
                    </svg>

                    <div class="node n-input">
                        <h3><svg><use href="#chev-thin"/></svg>Group Input</h3>
                        <div class="row out geo">Geometry</div>
                        <div class="row out empty"></div>
                    </div>

                    <div class="node n-distribute">
                        <h3 class="green"><svg><use href="#chev-thin"/></svg>Distribute Points on Faces</h3>
                        <div class="row out geo">Points</div>
                        <div class="row out vec dia">Normal</div>
                        <div class="row out vec dia">Rotation</div>
                        <label class="row spaced"><span class="dropdown small"><select aria-label="Distribute method"><option>Random</option></select><svg class="chev"><use href="#chev"/></svg></span></label>
                        <div class="row in geo">Mesh</div>
                        <div class="row in bool dia hollow">Selection</div>
                        <label class="row in float dia hollow"><span class="val">Density<input value="500.000"></span></label>
                        <label class="row in int"><span class="val">Seed<input value="0"></span></label>
                    </div>

                    <div class="node n-object">
                        <h3 class="red"><svg><use href="#chev-thin"/></svg>Object Info</h3>
                        <div class="row out vec">Location</div>
                        <div class="row out vec">Rotation</div>
                        <div class="row out vec">Scale</div>
                        <div class="row out geo">Geometry</div>
                        <div class="row spaced"><div class="seg small"><button class="on">Original</button><button>Relative</button></div></div>
                        <div class="row in obj"><div class="objfield"><svg class="icon"><use href="#object"/></svg><input value="Cylinder" aria-label="Object"><button aria-label="Clear"><svg><use href="#close"/></svg></button></div></div>
                        <label class="row in bool"><input type="checkbox">As Instance</label>
                    </div>

                    <div class="node n-instance">
                        <h3 class="green"><svg><use href="#chev-thin"/></svg>Instance on Points</h3>
                        <div class="row out geo">Instances</div>
                        <div class="row in geo lead">Points</div>
                        <div class="row in bool dia hollow">Selection</div>
                        <div class="row in geo">Instance</div>
                        <label class="row in bool dia hollow"><input type="checkbox">Pick Instance</label>
                        <div class="row in int dia">Instance Index</div>
                        <div class="row in vec dia">Rotation</div>
                        <div class="row in vec dia hollow">Scale:</div>
                        <div class="vals">
                            <label class="val">X<input value="1.000"></label>
                            <label class="val">Y<input value="1.000"></label>
                            <label class="val">Z<input value="1.000"></label>
                        </div>
                    </div>

                    <div class="node n-join">
                        <h3 class="green"><svg><use href="#chev-thin"/></svg>Join Geometry</h3>
                        <div class="row out geo">Geometry</div>
                        <div class="row in geo multi lead">Geometry</div>
                    </div>

                    <div class="node n-output">
                        <h3><svg><use href="#chev-thin"/></svg>Group Output</h3>
                        <div class="row in geo">Geometry</div>
                        <div class="row in empty"></div>
                    </div>

                    <div class="scroll-x"></div>
                    <div class="scroll-y"></div>

                    <div class="timer">
                        <div class="timer-head">
                            <svg viewBox="0 0 18 18"><circle cx="5" cy="5" r="3.500" fill="#bbb" stroke="#777"/><circle cx="12.500" cy="5" r="3.500" fill="#bbb" stroke="#777"/><path d="M2 11h14v2l-2 3H4l-2-3z" fill="#333"/></svg>
                            <span>KEEP WORKING</span>
                            <button aria-label="Close timer"><svg viewBox="0 0 12 12"><path d="M.5.5l11 11M11.500.5l-11 11" stroke="#777"/></svg></button>
                        </div>
                        <div class="timer-body"><time>01:02:42</time><button class="menu">ENU</button></div>
                    </div>
                </div>

                <aside class="nodeside">
                    <div class="panel-head"><svg class="chev"><use href="#right"/></svg><label><input type="checkbox" checked>Annotations</label><svg class="grip"><use href="#grip"/></svg></div>
                </aside>
                <nav class="ntabs"><button>Node</button><button>Tool</button><button class="active">View</button><button>Group</button><button>Node Wrangler</button></nav>
            </div>
        </section>
    </div>

    <div class="right">
        <!-- Outliner -->
        <section class="area outliner">
            <div class="bar">
                <button class="group pick" aria-label="Editor type"><svg class="icon"><use href="#outliner"/></svg><svg class="chev"><use href="#chev"/></svg></button>
                <button class="group pick" aria-label="Display mode"><svg class="icon"><use href="#layers"/></svg><svg class="chev"><use href="#chev"/></svg></button>
                <label class="group search"><svg class="icon"><use href="#search"/></svg><input type="search" aria-label="Search outliner"></label>
                <button class="group pick" aria-label="Filter"><svg class="icon"><use href="#filter"/></svg><svg class="chev"><use href="#chev"/></svg></button>
                <div class="group"><button class="cell" aria-label="New collection"><svg class="icon"><use href="#newcoll"/></svg></button></div>
            </div>
            <div class="treewrap">
                <ul class="tree-list">
                    <li class="l0"><i></i><b><svg><use href="#collection"/></svg></b><span>Scene Collection</span></li>
                    <li class="l1 odd"><i><svg><use href="#tri-down"/></svg></i><b class="hl"><svg><use href="#collection"/></svg></b><span>Collection</span><em><input type="checkbox" class="white" checked aria-label="Include Collection"><svg><use href="#eye"/></svg><svg><use href="#photo"/></svg></em></li>
                    <li class="l2 faded"><i><svg><use href="#tri-right"/></svg></i><b class="orange"><svg><use href="#movie"/></svg></b><span>Camera</span><b class="teal hl data"><svg><use href="#movie-o"/></svg></b><em><svg><use href="#eye-closed"/></svg><svg><use href="#photo"/></svg></em></li>
                    <li class="l2 odd"><i><svg><use href="#tri-right"/></svg></i><b class="orange"><svg><use href="#meshobj"/></svg></b><span>Cylinder</span><b class="teal data"><svg><use href="#mesh"/></svg></b><em><svg><use href="#eye"/></svg><svg><use href="#photo"/></svg></em></li>
                    <li class="l2"><i><svg><use href="#tri-down"/></svg></i><b class="orange"><svg><use href="#meshobj"/></svg></b><span>dough</span><em><svg><use href="#eye"/></svg><svg><use href="#photo"/></svg></em></li>
                    <li class="l3 odd"><i><svg><use href="#tri-right"/></svg></i><b class="teal"><svg><use href="#mesh"/></svg></b><span>Torus.001</span><b class="rose data"><svg><use href="#material"/></svg></b></li>
                    <li class="l2 picked"><i><svg><use href="#tri-down"/></svg></i><b class="orange hl"><svg><use href="#meshobj"/></svg></b><span>icing</span><em><svg><use href="#eye"/></svg><svg><use href="#photo"/></svg></em></li>
                    <li class="l3 odd"><i><svg><use href="#tri-right"/></svg></i><b class="teal"><svg><use href="#mesh"/></svg></b><span>Torus.002</span><b class="rose hl data"><svg><use href="#material"/></svg></b></li>
                    <li class="l3 chosen"><i><svg><use href="#tri-right"/></svg></i><b class="blue"><svg><use href="#wrench-o"/></svg></b><span>Modifiers</span><b class="blue data"><svg><use href="#subsurf"/></svg></b><b class="hl"><svg><use href="#geo"/></svg></b></li>
                    <li class="l2 odd"><i><svg><use href="#tri-right"/></svg></i><b class="orange"><svg><use href="#bulb"/></svg></b><span>Light</span><b class="teal data"><svg><use href="#lightdata"/></svg></b><em><svg><use href="#eye"/></svg><svg><use href="#photo"/></svg></em></li>
                    <li class="l2"><i><svg><use href="#tri-right"/></svg></i><b class="orange"><svg><use href="#meshobj"/></svg></b><span>Plane</span><b class="teal data"><svg><use href="#mesh"/></svg></b><em><svg><use href="#eye"/></svg><svg><use href="#photo"/></svg></em></li>
                </ul>
                <div class="guide"></div>
                <div class="scroll-y"></div>
                <div class="scroll-x"></div>
            </div>
        </section>

        <!-- Properties -->
        <section class="area properties">
            <div class="bar">
                <button class="group pick" aria-label="Editor type"><svg class="icon"><use href="#props"/></svg><svg class="chev"><use href="#chev"/></svg></button>
                <label class="group search"><svg class="icon"><use href="#search"/></svg><input type="search" aria-label="Search properties"></label>
                <div class="group"><button class="cell open" aria-label="Options"><svg class="chev"><use href="#chev"/></svg></button></div>
            </div>
            <div class="propbody">
                <nav class="proptabs">
                    <button aria-label="Tool"><svg><use href="#tools"/></svg></button>
                    <button class="split" aria-label="Render"><svg><use href="#render"/></svg></button>
                    <button aria-label="Output"><svg><use href="#output"/></svg></button>
                    <button aria-label="View layer"><svg><use href="#layers"/></svg></button>
                    <button aria-label="Scene"><svg><use href="#scene"/></svg></button>
                    <button class="rose" aria-label="World"><svg><use href="#world"/></svg></button>
                    <button class="split" aria-label="Collection"><svg><use href="#collection-o"/></svg></button>
                    <button class="split orange" aria-label="Object"><svg><use href="#object"/></svg></button>
                    <button class="active" aria-label="Modifiers"><svg><use href="#wrench"/></svg></button>
                    <button class="blue" aria-label="Particles"><svg><use href="#particles"/></svg></button>
                    <button class="blue" aria-label="Physics"><svg><use href="#physics"/></svg></button>
                    <button class="blue" aria-label="Constraints"><svg><use href="#constraint"/></svg></button>
                    <button class="teal" aria-label="Data"><svg><use href="#mesh"/></svg></button>
                    <button class="rose" aria-label="Material"><svg><use href="#material"/></svg></button>
                    <button class="split rose" aria-label="Texture"><svg><use href="#texture"/></svg></button>
                </nav>
                <div class="propmain">
                    <div class="crumb">
                        <svg class="icon"><use href="#object"/></svg><span>icing</span>
                        <svg class="sep"><use href="#right"/></svg>
                        <svg class="icon"><use href="#geo"/></svg><span>GeometryNodes</span>
                        <button class="plain" aria-label="Pin"><svg class="icon"><use href="#pin"/></svg></button>
                    </div>
                    <label class="group dropdown addmod"><select aria-label="Add modifier"><option>Add Modifier</option></select><svg class="chev"><use href="#chev"/></svg></label>

                    <div class="modifier">
                        <div class="modhead">
                            <svg class="chev big"><use href="#chev-thin"/></svg>
                            <svg class="icon"><use href="#subsurf"/></svg>
                            <div class="toggles"><input value="Su…" aria-label="Modifier name"><button aria-label="On cage"><svg class="icon"><use href="#mesh"/></svg></button><button class="on" aria-label="Edit mode"><svg class="icon"><use href="#editmode"/></svg></button><button class="on" aria-label="Realtime"><svg class="icon"><use href="#monitor"/></svg></button><button class="on" aria-label="Render"><svg class="icon"><use href="#photo-on"/></svg></button><button class="open" aria-label="More"><svg class="chev"><use href="#chev"/></svg></button></div>
                            <button class="plain" aria-label="Remove"><svg class="icon"><use href="#close"/></svg></button>
                            <svg class="grip"><use href="#grip"/></svg>
                        </div>
                        <div class="seg"><button class="on">Catmull-Clark</button><button>Simple</button></div>
                        <div class="levels">
                            <label class="lvl"><span>Levels View…</span><input value="1"><i></i></label>
                            <label class="lvl"><span>Render</span><input value="2"><i></i></label>
                        </div>
                        <div class="optimal"><label><input type="checkbox" checked>Optimal Display</label><i></i></div>
                        <button class="sub"><svg class="chev"><use href="#right"/></svg>Advanced</button>
                    </div>

                    <div class="modifier current">
                        <div class="modhead">
                            <svg class="chev big"><use href="#chev-thin"/></svg>
                            <svg class="icon"><use href="#geo"/></svg>
                            <div class="toggles"><input value="G…" aria-label="Modifier name"><button aria-label="On cage"><svg class="icon"><use href="#mesh"/></svg></button><button class="on" aria-label="Edit mode"><svg class="icon"><use href="#editmode"/></svg></button><button class="on" aria-label="Realtime"><svg class="icon"><use href="#monitor"/></svg></button><button class="on" aria-label="Render"><svg class="icon"><use href="#photo-on"/></svg></button><button class="open" aria-label="More"><svg class="chev"><use href="#chev"/></svg></button></div>
                            <button class="plain" aria-label="Remove"><svg class="icon"><use href="#close"/></svg></button>
                            <svg class="grip"><use href="#grip"/></svg>
                        </div>
                        <div class="group datablock modtree">
                            <button class="pick" aria-label="Browse node group"><svg class="icon"><use href="#tree"/></svg><svg class="chev"><use href="#chev"/></svg></button>
                            <input class="name" value="Geometry Nodes.001" aria-label="Node group">
                            <button class="cell" aria-label="Fake user"><svg class="icon"><use href="#shield"/></svg></button>
                            <button class="cell" aria-label="Duplicate"><svg class="icon bright"><use href="#copy"/></svg></button>
                            <button class="cell" aria-label="Unlink"><svg class="icon bright"><use href="#close"/></svg></button>
                        </div>
                        <button class="sub"><svg class="chev"><use href="#right"/></svg>Output Attributes</button>
                        <button class="sub"><svg class="chev"><use href="#right"/></svg>Internal Dependencies</button>
                    </div>
                    <a class="credit" href="https://jtam.tistory.com">https://jtam.tistory.com</a>
                </div>
            </div>
        </section>
    </div>
</main>

<footer class="status">
    <span><svg><use href="#mouse-l"/></svg>Select</span>
    <span><svg><use href="#mouse-m"/></svg>Pan View</span>
    <span><svg><use href="#mouse-r"/></svg>Node Context Menu</span>
    <span class="version">3.4.0</span>
</footer>

</body>
</html>
```
FILE: styles.css
```css
* {
    box-sizing: border-box;
}

body {
    margin: 0;
    height: 100vh;
    min-width: 1280px;
    display: flex;
    flex-direction: column;
    overflow: hidden;
    background: #181818;
    color: #e0e0e0;
    font: 13px/16px "DejaVu Sans", sans-serif;
    text-shadow: 0 1px 2px rgba(0, 0, 0, 0.6);
}

button, input, select {
    margin: 0;
    padding: 0;
    border: 0;
    background: none;
    color: inherit;
    font: inherit;
    text-shadow: inherit;
    min-width: 0;
    border-radius: 0;
}

button {
    display: flex;
    align-items: center;
    justify-content: center;
}

select {
    appearance: none;
    flex: 1;
}

input[type=search] {
    appearance: none;
    flex: 1;
}

input[type=checkbox] {
    appearance: none;
    flex: none;
    width: 16px;
    height: 16px;
    border-radius: 3px;
    background: #545454;
}

input[type=checkbox]:checked {
    background: #4772b3 url("data:image/svg+xml,%3Csvg xmlns='http://www.w3.org/2000/svg' viewBox='0 0 16 16'%3E%3Cpath d='M3.500 8.500l3 3.500 6.500-8' fill='none' stroke='white' stroke-width='2'/%3E%3C/svg%3E");
}

input[type=checkbox].white {
    width: 13px;
    height: 13px;
    border-radius: 1px;
}

input[type=checkbox].white:checked {
    background: #eee url("data:image/svg+xml,%3Csvg xmlns='http://www.w3.org/2000/svg' viewBox='0 0 16 16'%3E%3Cpath d='M3.500 8.500l3 3.500 6.500-8' fill='none' stroke='black' stroke-width='2'/%3E%3C/svg%3E");
}

h2, h3, p, ul {
    margin: 0;
    padding: 0;
    font-weight: normal;
}

svg {
    flex: none;
}

.sprite {
    position: absolute;
    width: 0;
    height: 0;
}

.icon {
    width: 18px;
    height: 18px;
}

.chev {
    width: 13px;
    height: 13px;
    margin-top: 2px;
}

.grip {
    width: 16px;
    height: 8px;
    color: #aaa;
}

.orange { color: #cd8148; }
.teal { color: #0fb488; }
.rose { color: #bb595f; }
.blue { color: #6289d8; }
.bright { color: #e6e6e6; }
.dim { color: #777; }

/* Window title and top bar */
.titlebar {
    height: 27px;
    flex: none;
    display: flex;
    align-items: center;
    padding-left: 2px;
    background: #000;
    color: #fff;
}

.titlebar .title {
    flex: 1;
    padding-left: 6px;
    font: 13px/18px "Noto Sans", "Noto Sans CJK KR", sans-serif;
}

.win {
    width: 55px;
    height: 27px;
}

.win svg {
    width: 11px;
    height: 11px;
}

.topbar {
    height: 30px;
    flex: none;
    display: flex;
    align-items: center;
    padding: 1px 9px 0 10px;
    background: #1c1c1c;
}

.logo .icon {
    width: 22px;
    height: 22px;
}

.menus {
    display: flex;
}

.menus button {
    padding: 0 8px;
    height: 22px;
}

.topbar .menus {
    padding-left: 2px;
}

.workspaces {
    display: flex;
    align-self: flex-end;
    flex: 1;
    padding-left: 21px;
    color: #999;
}

.workspaces button {
    height: 23px;
    padding: 0 11px;
    border-radius: 4px 4px 0 0;
}

.workspaces .active {
    background: #303030;
    color: #fff;
}

.workspaces .add {
    padding: 0 6px;
}

.workspaces .icon {
    width: 16px;
    height: 16px;
}

/* Shared header controls */
.bar {
    height: 30px;
    flex: none;
    display: flex;
    align-items: center;
    gap: 5px;
    padding: 2px 9px 0;
    background: #303030;
}

.bar.dark {
    background: #222;
}

.grow-3 { flex: 3; }
.grow-4 { flex: 4; }
.grow-5 { flex: 5; }
.grow-7 { flex: 7; }

.group {
    display: flex;
    height: 24px;
    border: 1px solid #3d3d3d;
    border-radius: 4px;
    background: #282828;
    overflow: hidden;
    flex: none;
}

.pick {
    width: 38px;
    gap: 1px;
}

.cell {
    width: 23px;
    height: 22px;
    background: #545454;
    color: #aaa;
}

.cell:only-child {
    width: 21px;
}

.cell + .cell {
    border-left: 1px solid #3d3d3d;
}

.cell.on {
    background: #4772b3;
    color: #fff;
}

.cell.open {
    background: #282828;
    color: #e0e0e0;
}

.off .cell, .cell.off {
    background: #2c2c2c;
    color: #555;
}

.pick.off {
    color: #888;
}

.pick.off .chev {
    color: #444;
}

.dropdown {
    display: flex;
    align-items: center;
    padding: 0 5px;
}

.dropdown select {
    padding-left: 7px;
}

.mode {
    width: 132px;
}

.orient {
    width: 96px;
}

.plain {
    color: #999;
}

.datablock {
    width: 230px;
    margin-left: 5px;
}

.datablock .name {
    flex: 1;
    padding-left: 9px;
    background: #1d1d1d;
}

.datablock .pinned {
    width: 26px;
    height: 22px;
    padding: 3px 4px;
    background: #1d1d1d;
}

.datablock .cell {
    border-left: 1px solid #3d3d3d;
}

.datablock.tree {
    width: 261px;
    margin-left: 0;
}

.topbar .datablock .cell:not(.off) {
    color: #ccc;
}

.search {
    align-items: center;
    background: #1d1d1d;
    padding-left: 5px;
    flex: 1;
}

/* Area layout */
.workspace {
    flex: 1;
    min-height: 0;
    display: grid;
    grid-template-columns: 1fr 330px;
    gap: 3px;
    padding: 2px 2px 2px 0;
}

.left, .right {
    display: grid;
    gap: 3px;
    min-height: 0;
    min-width: 0;
}

.left {
    grid-template-rows: minmax(0, 488fr) minmax(0, 504fr);
}

.right {
    grid-template-rows: minmax(0, 283fr) minmax(0, 709fr);
}

.area {
    display: flex;
    flex-direction: column;
    border-radius: 5px;
    overflow: hidden;
}

/* 3D viewport */
.region {
    position: relative;
    flex: 1;
    min-height: 0;
    display: flex;
    flex-direction: column;
    background: #949596;
}

.scene3d {
    position: absolute;
    width: 100%;
    height: 100%;
}

.outline {
    fill: none;
    stroke: #f79838;
    stroke-width: 4;
}

.rim {
    fill: none;
    stroke: #f79838;
    stroke-width: 21;
    stroke-linecap: round;
}

.core {
    fill: none;
    stroke: #8c8c8c;
    stroke-width: 13;
    stroke-linecap: round;
}

.shade {
    fill: none;
    stroke: #444;
    stroke-width: 5;
}

.toolsettings {
    position: relative;
    height: 31px;
    flex: none;
    display: flex;
    align-items: center;
    justify-content: space-between;
    padding: 2px 9px 0 51px;
    background: rgba(0, 0, 0, 0.47);
}

.selmodes {
    display: flex;
    height: 23px;
    border: 1px solid #3d3d3d;
    border-radius: 4px;
    overflow: hidden;
    background: #545454;
    color: #c8c8c8;
}

.selmodes button {
    width: 23px;
    border-right: 1px solid #3d3d3d;
}

.selmodes svg {
    width: 17px;
    height: 17px;
}

.selmodes .on {
    background: #4772b3;
    color: #fff;
}

.options {
    width: 76px;
    height: 24px;
    gap: 3px;
    border-radius: 4px;
    background: #282828;
}

.stage {
    position: relative;
    flex: 1;
    min-height: 0;
    display: flex;
}

.shelf {
    display: flex;
    flex-direction: column;
    gap: 5px;
    padding: 9px 20px 0 9px;
}

.toolset {
    outline: 1px solid #3a3a3a;
    outline-offset: -1px;
    border-radius: 4px;
    overflow: hidden;
    background: #282828;
}

.toolset button {
    position: relative;
    width: 51px;
    height: 42px;
    padding-right: 6px;
}

.toolset button + button {
    border-top: 1px solid #3d3d3d;
}

.toolset svg {
    width: 29px;
    height: 29px;
}

.toolset .on {
    background: #4772b3;
}

.more::after {
    content: "";
    position: absolute;
    right: 3px;
    bottom: 3px;
    border-left: 5px solid transparent;
    border-bottom: 5px solid #999;
}

.viewinfo {
    flex: 1;
    padding-top: 10px;
    line-height: 22px;
    color: #fff;
}

.nav {
    display: flex;
    flex-direction: column;
    align-items: flex-end;
    gap: 3px;
    padding: 12px 20px 0 0;
}

.axisball {
    width: 100px;
    height: 93px;
}

.axisball text {
    font: bold 13px "DejaVu Sans", sans-serif;
    text-anchor: middle;
    fill: #2a1c28;
    text-shadow: none;
}

.nav button {
    width: 33px;
    height: 33px;
    border-radius: 50%;
    background: #6f6f70;
    color: #e8e8e8;
}

.nav button svg {
    width: 20px;
    height: 20px;
}

.npanel {
    width: 218px;
    flex: none;
    margin: 2px 10px 0 0;
    padding: 0 10px;
    border-radius: 5px 5px 0 0;
    background: #3d3d3d;
    overflow: hidden;
}

.npanel h2 {
    height: 30px;
    margin-bottom: 6px;
    display: flex;
    align-items: center;
    font-size: 13px;
    color: #eee;
}

.npanel h2 .grip {
    margin-left: auto;
}

.npanel p {
    height: 27px;
    line-height: 28px;
    color: #ccc;
}

.vec3 {
    display: flex;
    justify-content: space-between;
}

.fields {
    width: 150px;
    display: grid;
    gap: 1px;
    border-radius: 4px;
    overflow: hidden;
}

.fields label {
    height: 23px;
    display: flex;
    align-items: center;
    padding: 0 15px 0 19px;
    background: #545454;
}

.fields input {
    flex: 1;
    width: 0;
    text-align: right;
}

.dims {
    width: 100%;
}

.dims label {
    height: 21px;
}

.locks {
    display: grid;
    padding-right: 10px;
    color: #a8a8a8;
}

.locks svg {
    width: 17px;
    height: 17px;
}

.wide {
    height: 22px;
    margin-top: 4px;
    border-radius: 4px;
    background: #282828;
}

.wide select {
    padding-left: 4px;
}

.ntabs {
    width: 24px;
    flex: none;
    display: flex;
    flex-direction: column;
    gap: 4px;
    padding-top: 6px;
    background: #181818;
    color: #c4c4c4;
}

.ntabs button {
    width: 21px;
    padding: 8px 0;
    writing-mode: vertical-rl;
    transform: rotate(180deg);
    border: 1px solid #3d3d3d;
    border-right: 0;
    border-radius: 5px 0 0 5px;
}

.ntabs .active {
    background: #303030;
    color: #fff;
}

/* Node editor */
.nodebody {
    flex: 1;
    min-height: 0;
    display: flex;
}

.canvas {
    position: relative;
    flex: 1;
    overflow: hidden;
    background: #1d1d1d url("data:image/svg+xml,%3Csvg xmlns='http://www.w3.org/2000/svg' width='83' height='83'%3E%3Cpath d='M-7 8H83M-7 24.500H83M-7 41H83M-7 57.500H83M-7 74H83' stroke='%23202020' stroke-width='3' stroke-dasharray='3 13.600'/%3E%3Cpath d='M9 39h4v4h-4z' fill='%23282828'/%3E%3C/svg%3E");
}

.path {
    display: flex;
    align-items: center;
    height: 54px;
    color: #e6e6e6;
}

.path span {
    margin-left: 9px;
}

.path .chev {
    margin: 0 12px 0 -3px;
}

.sep {
    width: 18px;
    height: 18px;
    margin: 0 7px 0 13px;
}

.links {
    position: absolute;
    left: 0;
    top: 0;
    width: 100%;
    height: 100%;
}

.node {
    position: absolute;
    width: 115px;
    padding-bottom: 4px;
    border-radius: 4px;
    background: #303030;
    box-shadow: 0 2px 7px #000;
    font: 9px/18px "DejaVu Sans Condensed", "Noto Sans", sans-serif;
}

.n-input { left: 228px; top: 41px; }
.n-distribute { left: 408px; top: 79px; width: 140px; }
.n-object { left: 423px; top: 280px; }
.n-instance { left: 770px; top: 128px; }
.n-join { left: 941px; top: 17px; }
.n-output { left: 1121px; top: 12px; }

.node h3 {
    display: flex;
    align-items: center;
    height: 17px;
    margin-bottom: 3px;
    padding: 0 0 2px 7px;
    gap: 4px;
    font-size: 9px;
    line-height: 14px;
    border-radius: 4px 4px 0 0;
    background: #1d1d1d;
}

.node h3 svg {
    width: 11px;
    height: 11px;
}

.node .green { background: #1d725e; }
.node .red { background: #83314a; }

.row {
    position: relative;
    height: 18px;
    padding: 0 9px;
    display: flex;
    align-items: center;
}

.row.out {
    justify-content: flex-end;
}

.row.spaced {
    margin: 7px 0 2px;
}

.row.lead {
    margin-top: 3px;
}

.in::before, .out::before {
    content: "";
    position: absolute;
    left: -5px;
    width: 9px;
    height: 9px;
    border-radius: 50%;
    border: 1px solid #111;
    background: var(--socket);
}

.out::before {
    left: auto;
    right: -5px;
}

.geo { --socket: #00d6a3; }
.vec { --socket: #6363c7; }
.bool { --socket: #cca6d6; }
.float { --socket: #a1a1a1; }
.int { --socket: #598c5c; }
.obj { --socket: #ed9e5c; }

.empty::before {
    border-color: #888;
    background: #222;
}

.dia::before {
    border-radius: 0;
    width: 8px;
    height: 8px;
    transform: rotate(45deg);
}

.hollow::before {
    background: radial-gradient(#222 1px, var(--socket) 2px);
}

.multi::before {
    width: 8px;
    height: 16px;
    border-radius: 3px;
}

.row .dropdown.small {
    flex: 1;
    height: 16px;
    border: 1px solid #3d3d3d;
    border-radius: 3px;
    background: #282828;
    padding: 0;
}

.small select {
    padding-left: 5px;
}

.small .chev {
    width: 8px;
    height: 8px;
}

.val {
    flex: 1;
    height: 16px;
    display: flex;
    align-items: center;
    padding: 0 10px 0 12px;
    border-radius: 2px;
    background: #545454;
    line-height: 15px;
}

.val input {
    flex: 1;
    width: 0;
    text-align: right;
}

.vals {
    display: grid;
    gap: 1px;
    margin: 0 9px;
}

.vals .val {
    height: 15px;
}

.n-instance {
    padding-bottom: 6px;
}

.node input[type=checkbox] {
    width: 11px;
    height: 11px;
    margin-right: 3px;
    border-radius: 2px;
}

.seg {
    flex: 1;
    display: flex;
    gap: 1px;
    border-radius: 4px;
    overflow: hidden;
}

.seg button {
    flex: 1;
    height: 22px;
    background: #545454;
}

.seg .on {
    background: #4772b3;
    color: #fff;
}

.seg.small {
    border-radius: 2px;
}

.seg.small button {
    height: 15px;
}

.objfield {
    flex: 1;
    height: 17px;
    display: flex;
    align-items: center;
    padding: 0 5px 0 3px;
    border: 1px solid #3d3d3d;
    border-radius: 3px;
    background: #1d1d1d;
}

.objfield .icon {
    width: 12px;
    height: 12px;
}

.objfield input {
    flex: 1;
    width: 0;
    padding-left: 6px;
}

.objfield button svg {
    width: 10px;
    height: 10px;
}

.scroll-x, .scroll-y {
    position: absolute;
    border-radius: 2px;
    background: #343434;
}

.canvas .scroll-x {
    left: 10px;
    right: 12px;
    bottom: 2px;
    height: 3px;
}

.canvas .scroll-y {
    right: 3px;
    top: 12px;
    bottom: 14px;
    width: 4px;
}

.nodeside {
    width: 241px;
    flex: none;
    padding: 2px 10px 0 9px;
    background: #303030;
}

.panel-head {
    height: 30px;
    display: flex;
    align-items: center;
    padding: 0 8px;
    border-radius: 4px;
    background: #3d3d3d;
}

.panel-head label {
    flex: 1;
    display: flex;
    gap: 3px;
    margin-left: 4px;
}

.panel-head .chev {
    margin: 0;
}

/* Desktop timer floating over the editor */
.timer {
    position: absolute;
    left: 16px;
    bottom: 14px;
    width: 187px;
    background: #fff;
    border: 1px solid #333;
    color: #000;
    text-shadow: none;
}

.timer-head {
    height: 29px;
    display: flex;
    align-items: center;
    padding: 0 13px 0 3px;
    color: #999;
    font: 14px/20px "Noto Sans", sans-serif;
}

.timer-head span {
    flex: 1;
    padding-left: 6px;
}

.timer-head > svg {
    width: 17px;
    height: 17px;
}

.timer-head button svg {
    width: 12px;
    height: 12px;
}

.timer-body {
    height: 35px;
    display: flex;
    align-items: center;
    padding: 8px 2px 0 6px;
    background: #adffff;
}

.timer time {
    font: bold 31px/27px "Liberation Mono", monospace;
}

.timer .menu {
    flex: 1;
    height: 18px;
    margin-bottom: 10px;
    border: 1px solid #999;
    border-left: 0;
    background: #e1e1e1;
    font: bold 10px "Liberation Serif", serif;
}

/* Outliner */
.outliner {
    background: #282828;
}

.outliner .bar {
    padding: 2px 2px 0 8px;
}

.outliner .search {
    margin: 0 12px;
}

.treewrap {
    position: relative;
    flex: 1;
    overflow: hidden;
}

.tree-list {
    list-style: none;
    margin-top: -10px;
}

.tree-list li {
    height: 24px;
    display: flex;
    align-items: center;
    padding: 1px 13px 0 0;
    color: #c8c8c8;
    text-shadow: none;
}

.tree-list li.odd { background: #2b2b2b; }
.tree-list li.picked { background: #1e3050; }
.tree-list li.chosen { background: #334d80; }
.tree-list .picked span { color: #f6a02d; }

.tree-list li.l1 { padding-left: 24px; }
.tree-list li.l2 { padding-left: 48px; }
.tree-list li.l3 { padding-left: 72px; }

.tree-list i, .tree-list b {
    width: 24px;
    height: 22px;
    flex: none;
    display: flex;
    align-items: center;
    justify-content: center;
}

.tree-list i svg {
    width: 13px;
    height: 13px;
}

.tree-list svg {
    width: 17px;
    height: 17px;
}

.tree-list span {
    margin-left: 4px;
}

.tree-list .data {
    margin-left: 23px;
}

.tree-list .hl {
    border-radius: 5px;
    background: rgba(255, 255, 255, 0.25);
}

.tree-list em {
    margin-left: auto;
    display: flex;
    align-items: center;
    gap: 8px;
    color: #e6e6e6;
}

.faded span, .faded i, .faded .orange {
    opacity: 0.55;
}

.guide {
    position: absolute;
    left: 35px;
    top: 44px;
    bottom: 5px;
    width: 1px;
    background: #555;
}

.treewrap .scroll-y {
    right: 2px;
    top: 21px;
    height: 206px;
    width: 3px;
}

.treewrap .scroll-x {
    left: 9px;
    right: 13px;
    bottom: 2px;
    height: 3px;
}

/* Properties editor */
.properties {
    background: #303030;
}

.properties .bar {
    padding: 0 8px;
}

.properties .search {
    margin: 0 64px 0 41px;
}

.propbody {
    flex: 1;
    min-height: 0;
    display: flex;
}

.proptabs {
    width: 33px;
    flex: none;
    padding: 8px 0 0 2px;
    background: #1c1c1c;
    color: #aaa;
}

.proptabs button {
    width: 31px;
    height: 33px;
    border-radius: 4px 0 0 4px;
}

.proptabs .rose { color: #bb595f; }
.proptabs .orange { color: #cd8148; }
.proptabs .blue { color: #6289d8; }
.proptabs .teal { color: #0fb488; }

.proptabs svg {
    width: 17px;
    height: 17px;
}

.proptabs .split {
    margin-top: 9px;
}

.proptabs .active {
    background: #303030;
    color: #6e9bf5;
}

.propmain {
    position: relative;
    flex: 1;
    min-width: 0;
    padding: 0 8px 0 9px;
}

.crumb {
    height: 51px;
    display: flex;
    align-items: center;
    padding: 0 3px 9px;
}

.crumb span {
    margin-left: 11px;
}

.crumb .sep {
    margin: 0 5px 0 12px;
}

.crumb .plain {
    margin-left: auto;
}

.addmod {
    height: 24px;
    margin-bottom: 11px;
    padding: 0 1px;
}

.modifier {
    width: calc(100% - 2px);
    margin-bottom: 3px;
    padding: 0 10px;
    border-radius: 5px;
    background: #3d3d3d;
}

.current {
    padding: 0 9px;
    border: 1px solid #4772b3;
}

.modhead {
    height: 30px;
    display: flex;
    align-items: center;
    margin-bottom: 10px;
}

.current .modhead {
    height: 28px;
    margin-bottom: 11px;
}

.chev.big {
    width: 16px;
    height: 16px;
    margin: 0 4px 0 -4px;
}

.modhead > .icon {
    margin: 0 14px 0 1px;
}

.modhead .plain {
    color: #ccc;
}

.modhead .grip {
    margin-left: auto;
}

.toggles {
    height: 23px;
    display: flex;
    gap: 1px;
    margin-right: 5px;
    border-radius: 4px;
    overflow: hidden;
}

.toggles input {
    width: 44px;
    padding-left: 9px;
    background: #1d1d1d;
}

.toggles button {
    width: 22px;
    background: #545454;
}

.toggles .on {
    background: #4772b3;
    color: #fff;
}

.toggles .open {
    background: #282828;
}

.levels {
    margin-top: 6px;
    display: grid;
    gap: 1px;
}

.lvl {
    height: 23px;
    display: flex;
    align-items: center;
}

.lvl span {
    width: 88px;
    margin-right: 11px;
    text-align: right;
    white-space: nowrap;
    color: #ccc;
}

.lvl input {
    flex: 1;
    width: 0;
    height: 23px;
    background: #545454;
    text-align: center;
    border-radius: 4px;
}

.lvl i, .optimal i {
    flex: none;
    width: 4px;
    height: 4px;
    margin: 0 9px 0 11px;
    border-radius: 50%;
    background: #ddd;
}

.optimal {
    height: 36px;
    display: flex;
    align-items: center;
    padding-left: 99px;
    margin-bottom: 4px;
}

.optimal label {
    flex: 1;
    display: flex;
    gap: 4px;
    white-space: nowrap;
}

.sub {
    height: 28px;
    gap: 5px;
    padding-left: 14px;
}

.sub + .sub {
    margin-top: 2px;
}

.sub .chev {
    margin: 0;
}

.modtree {
    width: 100%;
    height: 22px;
    margin: 0 0 11px;
    border: 0;
}

.credit {
    position: absolute;
    right: 39px;
    bottom: 16px;
    color: #d8d8d8;
    font: 15px/22px "Open Sans", sans-serif;
    text-decoration: none;
}

/* Status bar */
.status {
    height: 24px;
    flex: none;
    display: flex;
    align-items: center;
    padding: 1px 11px 0 14px;
    background: #1c1c1c;
    color: #999;
}

.status span {
    width: 279px;
    display: flex;
    align-items: center;
    gap: 14px;
}

.status svg {
    width: 13px;
    height: 18px;
}

.status .version {
    width: auto;
    margin-left: auto;
}
```
